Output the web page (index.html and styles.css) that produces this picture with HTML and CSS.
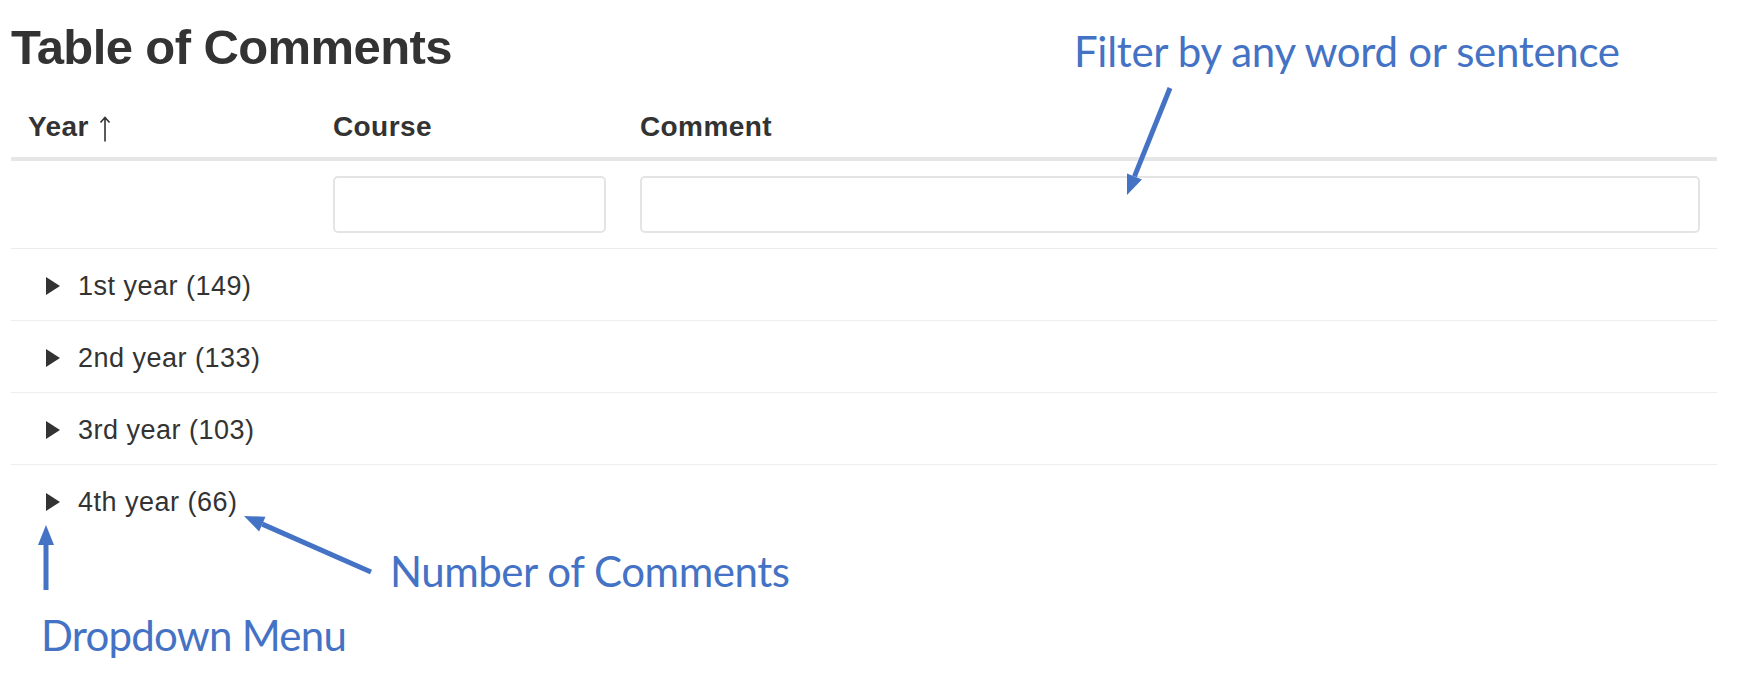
FILE: index.html
```html
<!DOCTYPE html>
<html lang="en">
<head>
<meta charset="utf-8">
<title>Table of Comments</title>
<link rel="stylesheet" href="styles.css">
</head>
<body>
<div class="page">
  <h1 class="title">Table of Comments</h1>
  <table class="grid">
    <colgroup>
      <col class="c-year">
      <col class="c-course">
      <col class="c-comment">
    </colgroup>
    <thead>
      <tr class="head">
        <th>Year <svg class="sort" width="12" height="26" viewBox="0 0 12 26"><path d="M6 1.5 V25.5 M1.5 6.5 L6 1.5 L10.5 6.5" fill="none" stroke="#333" stroke-width="1.6"/></svg></th>
        <th>Course</th>
        <th>Comment</th>
      </tr>
      <tr class="filters">
        <th></th>
        <th><input class="filter" type="text"></th>
        <th><input class="filter" type="text"></th>
      </tr>
    </thead>
    <tbody>
      <tr class="group"><td><span class="toggle"></span><span>1st year (149)</span></td><td></td><td></td></tr>
      <tr class="group"><td><span class="toggle"></span><span>2nd year (133)</span></td><td></td><td></td></tr>
      <tr class="group"><td><span class="toggle"></span><span>3rd year (103)</span></td><td></td><td></td></tr>
      <tr class="group last"><td><span class="toggle"></span><span>4th year (66)</span></td><td></td><td></td></tr>
    </tbody>
  </table>

  <div class="note note-filter">Filter by any word or sentence</div>
  <div class="note note-count">Number of Comments</div>
  <div class="note note-drop">Dropdown Menu</div>

  <svg class="arrows" width="1748" height="680" viewBox="0 0 1748 680">
    <g stroke="#4472C4" stroke-width="5" fill="none">
      <line x1="1170" y1="88" x2="1134.5" y2="176.4"/>
      <line x1="371" y1="572" x2="262.3" y2="524.1"/>
      <line x1="46" y1="590" x2="46" y2="545"/>
    </g>
    <g fill="#4472C4">
      <polygon points="1127,195 1141.9,179.4 1127.0,173.4"/>
      <polygon points="244,516 265.5,516.8 259.1,531.4"/>
      <polygon points="46,525 38,545 54,545"/>
    </g>
  </svg>
</div>
</body>
</html>
```

FILE: styles.css
```css
html, body {
  margin: 0;
  padding: 0;
  background: #fff;
}

.page {
  position: relative;
  width: 1748px;
  height: 680px;
  padding-left: 11px;
  box-sizing: border-box;
  font-family: "Liberation Sans", Arial, sans-serif;
  color: #333;
  overflow: hidden;
}

.title {
  margin: 0;
  padding-top: 19px;
  font-size: 49px;
  line-height: 56px;
  font-weight: 700;
  letter-spacing: -0.6px;
  color: #333;
}

.grid {
  margin-top: 22px;
  width: 1706px;
  table-layout: fixed;
  border-collapse: separate;
  border-spacing: 0;
}

.c-year { width: 305px; }
.c-course { width: 307px; }

.head th {
  text-align: left;
  font-size: 28px;
  line-height: 32px;
  font-weight: 700;
  letter-spacing: 0.4px;
  padding: 14px 17px;
  border-bottom: 4px solid #e6e6e6;
  white-space: nowrap;
}

.sort {
  vertical-align: -6px;
  margin-left: 2px;
}

.filters th {
  padding: 15px 17px;
  border-bottom: 1px solid #ececec;
}

.filter {
  display: block;
  width: 100%;
  height: 57px;
  box-sizing: border-box;
  margin: 0;
  border: 2px solid #e4e4e4;
  border-radius: 5px;
  background: #fff;
  outline: none;
}

.group td {
  padding: 21px 17px 18px;
  font-size: 27px;
  line-height: 32px;
  letter-spacing: 0.5px;
  border-bottom: 1px solid #eeeeee;
  white-space: nowrap;
}

.group td:first-child {
  display: flex;
  align-items: center;
  gap: 18px;
  padding-left: 35px;
}

.group.last td {
  border-bottom: none;
}

.toggle {
  width: 0;
  height: 0;
  border-top: 9px solid transparent;
  border-bottom: 9px solid transparent;
  border-left: 14px solid #333;
}

.note {
  position: absolute;
  font-family: Lato, "Open Sans", sans-serif;
  font-size: 42px;
  line-height: 50px;
  color: #4472C4;
  white-space: nowrap;
}

.note-filter { left: 1074px; top: 26px; letter-spacing: -0.3px; }
.note-count { left: 390px; top: 546px; letter-spacing: -0.45px; }
.note-drop { left: 41px; top: 610px; letter-spacing: -0.75px; }

.arrows {
  position: absolute;
  left: 0;
  top: 0;
  pointer-events: none;
}
```
